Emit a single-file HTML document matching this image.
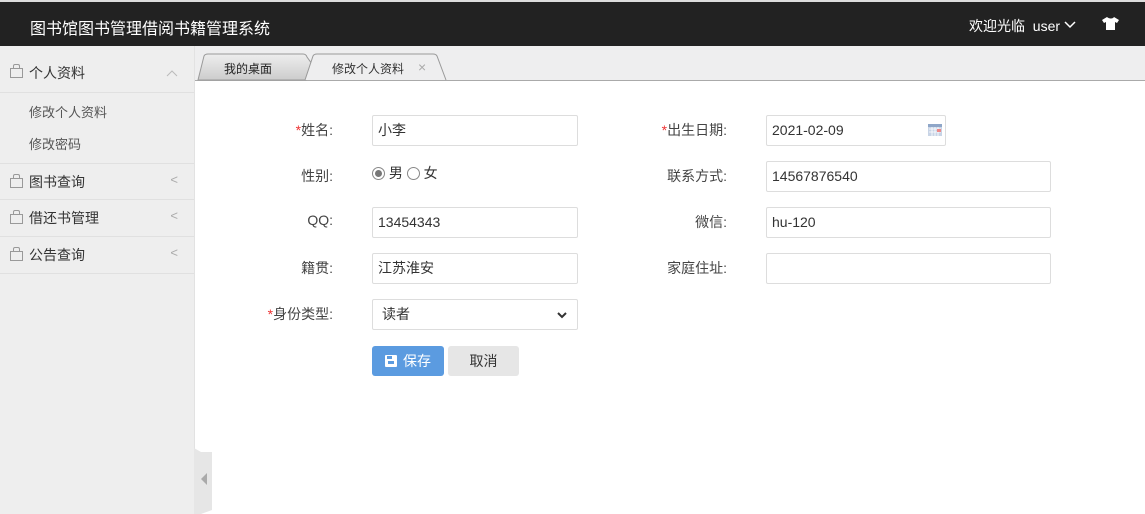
<!DOCTYPE html>
<html><head><meta charset="utf-8"><style>
*{margin:0;padding:0;box-sizing:border-box}
body{width:1145px;height:514px;overflow:hidden;background:#fff;font-family:"Liberation Sans","Noto Sans CJK SC",sans-serif;font-size:14px;color:#333;position:relative}
.top{position:absolute;left:0;top:0;width:1145px;height:46px;background:#222;border-top:2px solid #ddd}
.title{position:absolute;left:30px;top:13px;color:#fff;font-size:16px}
.welcome{position:absolute;left:969px;top:14px;color:#fff;font-size:14px}
.side{position:absolute;left:0;top:46px;width:195px;height:468px;background:#eee;border-right:1px solid #e2e2e2}
.mi{position:absolute;left:0;width:194px;height:37px;border-bottom:1px solid #e0e0e0}
.mi .t{position:absolute;left:29px;top:8px;font-size:14px;color:#333}
.mi .ar{position:absolute;right:16px;top:8px;color:#aaa;font-size:13px}
.bag{position:absolute;left:10px;top:14px;width:13px;height:10px;border:1px solid #999;}
.bag:before{content:"";position:absolute;left:2px;top:-5px;width:5px;height:4px;border:1px solid #999;border-bottom:none;border-radius:2px 2px 0 0}
.sub{position:absolute;left:29px;font-size:13px;color:#555}
.tabbar{position:absolute;left:195px;top:46px;width:950px;height:35px;background:#eeeeef;border-bottom:1px solid #aaa}
.lab{position:absolute;text-align:right;width:140px;font-size:14px;color:#444}
.lab i{color:#e33;font-style:normal}
.in{position:absolute;height:31px;border:1px solid #ddd;border-radius:2px;padding-left:5px;line-height:29px;font-size:14px;color:#333;background:#fff}
</style></head><body>
<div class="top"><div class="title">图书馆图书管理借阅书籍管理系统</div>
<div class="welcome">欢迎光临&nbsp;&nbsp;user <svg width="12" height="8" viewBox="0 0 12 8" style="vertical-align:2px"><path d="M1 1l5 5 5-5" stroke="#fff" stroke-width="1.5" fill="none"/></svg></div>
<svg style="position:absolute;left:1102px;top:15px" width="17" height="13" viewBox="0 0 17 13"><path d="M5 0L0 3l2 3 2-1v8h9V5l2 1 2-3-5-3c-1 2-5 2-7 0z" fill="#fff"/></svg>
</div>
<div class="side">
<div class="mi" style="top:0;height:47px"><div class="bag" style="top:22px"></div><div class="t" style="top:17px">个人资料</div><svg style="position:absolute;left:166px;top:24px" width="12" height="7"><path d="M1 6l5-5 5 5" stroke="#bbb" fill="none"/></svg></div>
<div class="sub" style="top:56px">修改个人资料</div>
<div class="sub" style="top:88px">修改密码</div>
<div class="mi" style="top:117px;border-top:1px solid #e0e0e0"><div class="bag"></div><div class="t">图书查询</div><div class="ar">&lt;</div></div>
<div class="mi" style="top:154px"><div class="bag"></div><div class="t">借还书管理</div><div class="ar">&lt;</div></div>
<div class="mi" style="top:191px"><div class="bag"></div><div class="t">公告查询</div><div class="ar">&lt;</div></div>
</div>
<svg style="position:absolute;left:194px;top:448px" width="18" height="66"><path d="M0 0l7 4h11v58l-11 4H0z" fill="#e6e6e6"/><path d="M7 31l6-6v12z" fill="#aaa"/></svg>
<div class="tabbar">
<svg style="position:absolute;left:0;top:0" width="260" height="35"><defs><linearGradient id="g" x1="0" y1="0" x2="0" y2="1"><stop offset="0" stop-color="#eee"/><stop offset="1" stop-color="#ccc"/></linearGradient></defs>
<path d="M3 34L9 10Q10 8 13 8H108Q111 8 112 11L117 18 111 34z" fill="url(#g)" stroke="#999"/>
<path d="M110 34L118 10Q119 8 122 8H238Q241 8 242 10L251 34" fill="#eeeeef" stroke="#999"/></svg>
<div style="position:absolute;left:29px;top:14px;font-size:12px;color:#222">我的桌面</div>
<div style="position:absolute;left:137px;top:14px;font-size:12px;color:#333">修改个人资料</div>
<div style="position:absolute;left:223px;top:13px;font-size:14px;color:#aaa">×</div>
</div>
<div class="lab" style="left:193px;top:120px"><i>*</i>姓名:</div>
<div class="in" style="left:372px;top:115px;width:206px">小李</div>
<div class="lab" style="left:193px;top:166px">性别:</div>
<div style="position:absolute;left:372px;top:163px;font-size:14px"><span style="display:inline-block;width:13px;height:13px;border:1px solid #888;border-radius:50%;vertical-align:-2px;position:relative"><span style="position:absolute;left:2px;top:2px;width:7px;height:7px;border-radius:50%;background:#777"></span></span> 男 <span style="display:inline-block;width:13px;height:13px;border:1px solid #888;border-radius:50%;vertical-align:-2px"></span> 女</div>
<div class="lab" style="left:193px;top:212px">QQ:</div>
<div class="in" style="left:372px;top:207px;width:206px">13454343</div>
<div class="lab" style="left:193px;top:258px">籍贯:</div>
<div class="in" style="left:372px;top:253px;width:206px">江苏淮安</div>
<div class="lab" style="left:193px;top:304px"><i>*</i>身份类型:</div>
<div class="in" style="left:372px;top:299px;width:206px;padding-left:9px;font-size:14px">读者<svg style="position:absolute;right:10px;top:12px" width="10" height="7"><path d="M1 1l4 4 4-4" stroke="#333" stroke-width="2" fill="none"/></svg></div>
<div style="position:absolute;left:372px;top:346px;width:72px;height:30px;background:#5b9be0;border-radius:3px;color:#fff;font-size:14px;line-height:30px"><span style="position:absolute;left:13px;top:9px;width:12px;height:12px;background:#fff;border-radius:1px"><span style="position:absolute;left:3px;top:6px;width:6px;height:3px;background:#5b9be0"></span><span style="position:absolute;left:2px;top:1px;width:5px;height:3px;background:#5b9be0"></span></span><span style="position:absolute;left:31px;top:0">保存</span></div>
<div style="position:absolute;left:448px;top:346px;width:71px;height:30px;background:#e6e6e6;border-radius:3px;color:#333;font-size:14px;line-height:30px;text-align:center">取消</div>
<div class="lab" style="left:587px;top:120px"><i>*</i>出生日期:</div>
<div class="in" style="left:766px;top:115px;width:180px">2021-02-09<svg style="position:absolute;right:3px;top:8px" width="14" height="12"><rect x="0" y="0" width="14" height="12" fill="#c8d4e6"/><rect x="0" y="0" width="14" height="3" fill="#8fa6c8"/><path d="M1 5h12M1 8h12M4 3v9M7 3v9M10 3v9" stroke="#fff" stroke-width=".8"/><rect x="9" y="5" width="4" height="3" fill="#e88"/></svg></div>
<div class="lab" style="left:587px;top:166px">联系方式:</div>
<div class="in" style="left:766px;top:161px;width:285px">14567876540</div>
<div class="lab" style="left:587px;top:212px">微信:</div>
<div class="in" style="left:766px;top:207px;width:285px">hu-120</div>
<div class="lab" style="left:587px;top:258px">家庭住址:</div>
<div class="in" style="left:766px;top:253px;width:285px"></div>
</body></html>
